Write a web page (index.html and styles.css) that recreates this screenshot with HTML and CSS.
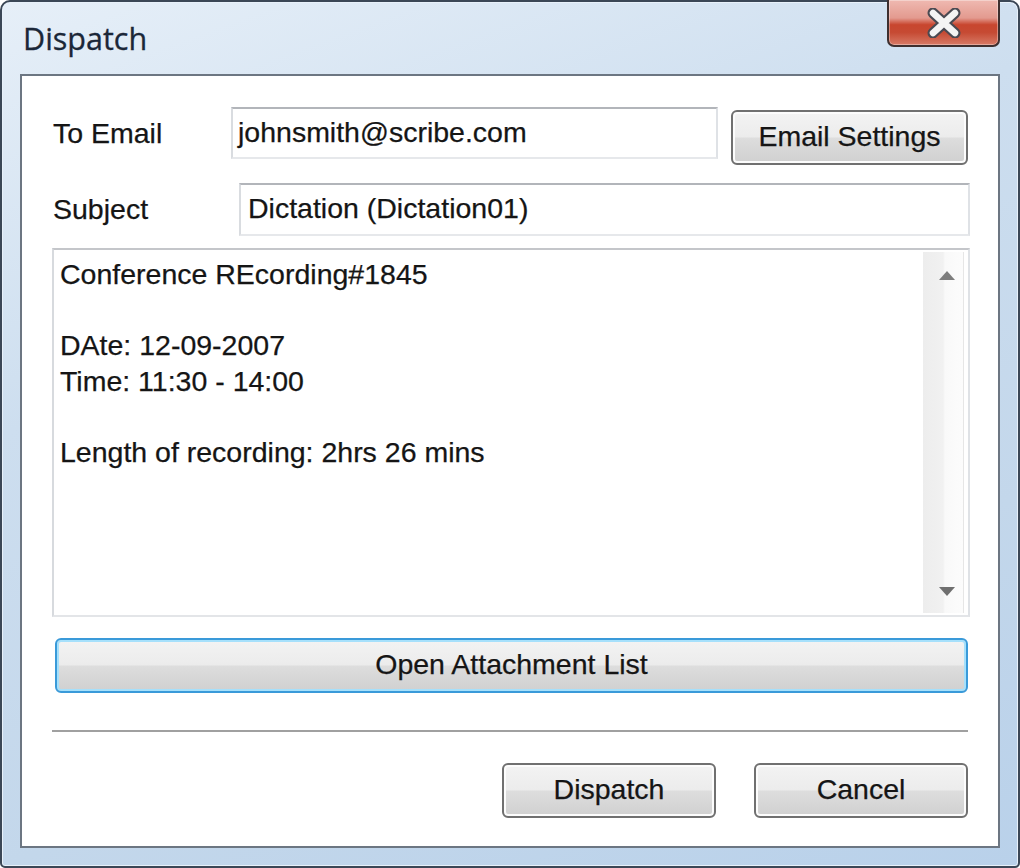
FILE: index.html
```html
<!DOCTYPE html>
<html lang="en">
<head>
    <meta charset="UTF-8">
    <meta name="viewport" content="width=device-width, initial-scale=1.0">
    <title>Dispatch</title>
    <link rel="stylesheet" href="styles.css">
</head>
<body>
    <div class="window">
        <div class="titlebar">
            <span class="title">Dispatch</span>
            <button class="close-button" title="Close">
                <svg width="40" height="30" viewBox="0 0 40 30">
                    <path d="M9 5 L31 25 M31 5 L9 25" stroke="#4a4a52" stroke-width="11" stroke-linecap="round"/>
                    <path d="M9 5 L31 25 M31 5 L9 25" stroke="#f4f4f4" stroke-width="6.5" stroke-linecap="round"/>
                </svg>
            </button>
        </div>
        <div class="client">
            <div class="row row-email">
                <label class="field-label label-email" for="toEmail">To Email</label>
                <div class="textbox textbox-email" id="toEmail">johnsmith@scribe.com</div>
                <button class="btn btn-settings">Email Settings</button>
            </div>
            <div class="row row-subject">
                <label class="field-label label-subject" for="subject">Subject</label>
                <div class="textbox textbox-subject" id="subject">Dictation (Dictation01)</div>
            </div>
            <div class="memo">
                <div class="memo-text">Conference REcording#1845

DAte: 12-09-2007
Time: 11:30 - 14:00

Length of recording: 2hrs 26 mins</div>
                <div class="scrollbar">
                    <span class="arrow arrow-up"></span>
                    <span class="arrow arrow-down"></span>
                </div>
            </div>
            <button class="btn btn-default btn-attach">Open Attachment List</button>
            <div class="separator"></div>
            <div class="actions">
                <button class="btn btn-action">Dispatch</button>
                <button class="btn btn-action">Cancel</button>
            </div>
        </div>
    </div>
</body>
</html>
```
FILE: styles.css
```css
body {
    margin: 0;
    background: #ffffff;
    font-family: "Liberation Sans", Arial, sans-serif;
    color: #151515;
}
.window {
    width: 1020px;
    height: 868px;
    box-sizing: border-box;
    border: 2px solid #3b4756;
    border-radius: 10px 10px 5px 5px;
    background: linear-gradient(160deg, #e6eff8 0%, #cddeef 35%, #c3d7eb 70%, #b9d1ea 100%);
    box-shadow: inset 0 0 0 1px #e8f1fa;
    display: flex;
    flex-direction: column;
    padding: 0 18px 18px 18px;
}
.titlebar {
    height: 72px;
    display: flex;
    align-items: flex-start;
    justify-content: space-between;
}
.title {
    font-family: "Open Sans", "Noto Sans", sans-serif;
    font-size: 30.5px;
    color: #1b2738;
    margin: 15px 0 0 3px;
    -webkit-text-stroke: 0.3px #1b2738;
}
.close-button {
    width: 113px;
    height: 47px;
    margin-top: -2px;
    border: 2px solid #3e2f2f;
    border-top: none;
    border-radius: 0 0 7px 7px;
    background: linear-gradient(to bottom, #efb9b1 0%, #e39a8f 40%, #c8462f 55%, #c64a33 72%, #d77a66 100%);
    box-shadow: inset 0 0 0 1px rgba(255, 255, 255, 0.35);
    display: flex;
    align-items: center;
    justify-content: center;
    padding: 0;
}
.client {
    flex: 1;
    background: #ffffff;
    border: 2px solid #6c7682;
    padding: 31px 28px 0 30px;
    display: flex;
    flex-direction: column;
}
.row {
    display: flex;
    align-items: flex-start;
}
.field-label {
    font-size: 28.5px;
    line-height: 52px;
    padding-left: 1px;
    -webkit-text-stroke: 0.25px #151515;
}
.label-email {
    width: 178px;
}
.label-subject {
    width: 186px;
}
.textbox {
    box-sizing: border-box;
    height: 52px;
    border: 2px solid;
    border-color: #b2b5ba #dfe2e6 #e6e8eb #d9dce0;
    font-size: 28.5px;
    line-height: 46px;
    padding-left: 5px;
    white-space: nowrap;
    -webkit-text-stroke: 0.25px #151515;
}
.textbox-email {
    width: 487px;
}
.textbox-subject {
    flex: 1;
    height: 53px;
    padding-left: 7px;
}
.row-subject {
    margin-top: 18px;
}
.btn {
    font-family: "Liberation Sans", Arial, sans-serif;
    font-size: 28.5px;
    color: #151515;
    -webkit-text-stroke: 0.25px #151515;
    box-sizing: border-box;
    height: 55px;
    border: 2px solid #707070;
    border-radius: 6px;
    background: linear-gradient(to bottom, #f3f3f3 0%, #ececec 48%, #dddddd 52%, #d0d0d0 100%);
    box-shadow: inset 0 0 0 2px #fcfcfc;
    padding: 0 0 2px 0;
    cursor: pointer;
}
.btn-settings {
    width: 237px;
    margin: 3px 0 0 13px;
}
.memo {
    box-sizing: border-box;
    margin-top: 12px;
    height: 369px;
    border: 2px solid;
    border-color: #c4c6ca #dfe2e6 #e3e5e8 #d7dade;
    display: flex;
}
.memo-text {
    flex: 1;
    white-space: pre;
    font-size: 28.5px;
    line-height: 35.5px;
    padding: 7px 0 0 6px;
    -webkit-text-stroke: 0.25px #151515;
}
.scrollbar {
    position: relative;
    width: 40px;
    margin: 2px 4px 2px 0;
    background: linear-gradient(to right, #ededed 0%, #f1f1f1 50%, #f9f9f9 55%, #fcfcfc 100%);
    border-right: 1px solid #e6e6e6;
}
.arrow {
    position: absolute;
    left: 16px;
    width: 0;
    height: 0;
    border-left: 8px solid transparent;
    border-right: 8px solid transparent;
}
.arrow-up {
    top: 19px;
    border-bottom: 9px solid #7d7d7d;
}
.arrow-down {
    bottom: 17px;
    border-top: 9px solid #6f6f6f;
}
.btn-default {
    border-color: #3a9ad9;
    box-shadow: inset 0 0 0 2px #a6e0fb;
}
.btn-attach {
    margin: 21px 2px 0 3px;
}
.separator {
    margin-top: 37px;
    height: 2px;
    background: #a0a0a0;
    border-bottom: 1px solid #ffffff;
    margin-right: 2px;
}
.actions {
    display: flex;
    justify-content: flex-end;
    gap: 38px;
    margin: 30px 2px 0 0;
}
.btn-action {
    width: 214px;
}
```
